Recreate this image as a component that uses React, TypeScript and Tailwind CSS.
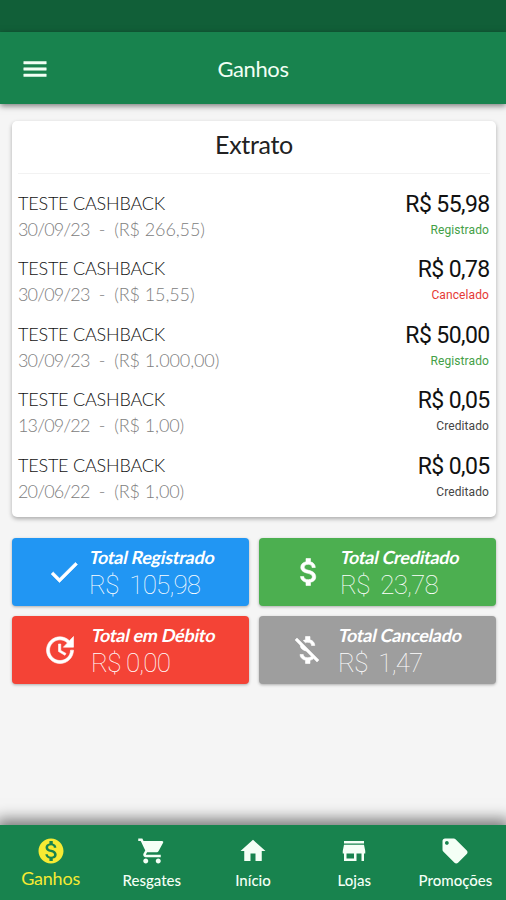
import React from "react";
import {
  MdMenu, MdCheck, MdUpdate, MdAttachMoney, MdMoneyOff, MdMonetizationOn,
  MdShoppingCart, MdHome, MdStore, MdLocalOffer,
} from "react-icons/md";

const entries = [
  { date: "30/09/23", base: "(R$ 266,55)", value: "R$ 55,98", status: "Registrado", color: "text-[#43a047]" },
  { date: "30/09/23", base: "(R$ 15,55)", value: "R$ 0,78", status: "Cancelado", color: "text-[#e53935]" },
  { date: "30/09/23", base: "(R$ 1.000,00)", value: "R$ 50,00", status: "Registrado", color: "text-[#43a047]" },
  { date: "13/09/22", base: "(R$ 1,00)", value: "R$ 0,05", status: "Creditado", color: "text-[#444]" },
  { date: "20/06/22", base: "(R$ 1,00)", value: "R$ 0,05", status: "Creditado", color: "text-[#444]" },
];

const totals = [
  { label: "Total Registrado", value: "R$  105,98", Icon: MdCheck, bg: "bg-[#2196f3]", pad: "pl-[34px]", gap: "ml-[7px]" },
  { label: "Total Creditado", value: "R$  23,78", Icon: MdAttachMoney, bg: "bg-[#4caf50]", pad: "pl-[32px]", gap: "ml-[13px]" },
  { label: "Total em Débito", value: "R$ 0,00", Icon: MdUpdate, bg: "bg-[#f44336]", pad: "pl-[30px]", gap: "ml-[13px]" },
  { label: "Total Cancelado", value: "R$  1,47", Icon: MdMoneyOff, bg: "bg-[#9e9e9e]", pad: "pl-[30px]", gap: "ml-[13px]" },
];

const tabs = [
  { label: "Ganhos", Icon: MdMonetizationOn },
  { label: "Resgates", Icon: MdShoppingCart },
  { label: "Início", Icon: MdHome },
  { label: "Lojas", Icon: MdStore },
  { label: "Promoções", Icon: MdLocalOffer },
];

export default function App() {
  return (
    <div className="flex h-[900px] w-[506px] flex-col overflow-hidden bg-[#f5f5f5] font-[Lato,sans-serif]">
      <div className="h-8 shrink-0 bg-[#115f38]" />
      <header className="relative flex h-[72px] shrink-0 items-center bg-[#18834e] text-[#f1fff4] shadow-[0_2px_6px_rgba(0,0,0,0.5)]">
        <MdMenu size={30} strokeWidth={0.4} className="mt-px ml-5 [&>path[fill=none]]:stroke-none" />
        <h1 className="-ml-[50px] flex-1 pt-px text-center text-[22px] leading-6 tracking-[-0.4px]">Ganhos</h1>
      </header>

      <main className="flex-1 pt-[17px] pr-[10px] pl-[12px]">
        <section className="h-[396px] rounded-[5px] bg-white pr-[6px] pl-[6px] shadow-[0_2px_4px_rgba(0,0,0,0.3)]">
          <h2 className="h-[53px] border-b border-[#f2f2f2] pt-[7px] text-center text-[25px] leading-8 tracking-[-0.3px] text-[#222]">Extrato</h2>
          <ul className="pt-[16px]">
            {entries.map((e, i) => (
              <li key={i} className="flex h-[65.4px] justify-between">
                <div>
                  <p className="text-[18px] leading-[26px] font-light tracking-[-0.2px] text-[#111]">TESTE CASHBACK</p>
                  <p className="text-[18px] leading-[26px] font-light whitespace-pre text-[#808080]">
                    <span className="tracking-[-0.85px]">{e.date}</span>
                    <span className="tracking-[-0.3px]">{"  -  "}</span>
                    <span className="tracking-[-0.1px]">{e.base}</span>
                  </p>
                </div>
                <div className="pt-px pr-px text-right font-[Roboto,sans-serif]">
                  <p className="-mr-[0.6px] text-[23px] leading-[28px] tracking-[-0.6px] text-[#111]">{e.value}</p>
                  <p className={"text-[12px] leading-[22px] tracking-[0.1px] " + e.color}>{e.status}</p>
                </div>
              </li>
            ))}
          </ul>
        </section>

        <section className="mt-[21px] grid grid-cols-2 gap-x-[10px] gap-y-[10px]">
          {totals.map(({ label, value, Icon, bg, pad, gap }) => (
            <div key={label} className={"flex h-[68px] items-center rounded-[4px] text-white shadow-[0_1px_3px_rgba(0,0,0,0.3)] " + bg + " " + pad}>
              <Icon size={36} strokeWidth={0.4} className="shrink-0 [&>path[fill=none]]:stroke-none" />
              <div className={"whitespace-pre " + gap}>
                <p className="-skew-x-12 pl-px text-[18px] leading-[26px] font-bold tracking-[-0.25px]">{label}</p>
                <p className="font-[Roboto,sans-serif] text-[26px] leading-[30px] font-thin tracking-[-0.85px]">{value}</p>
              </div>
            </div>
          ))}
        </section>
      </main>

      <nav className="grid h-[75px] shrink-0 grid-cols-5 bg-[#18834e] text-[#f4fff6] shadow-[0_-2px_14px_4px_rgba(0,0,0,0.5)]">
        {tabs.map(({ label, Icon }, i) => (
          <div key={label} className={"flex flex-col items-center pt-[11px] " + (i === 0 ? "text-[#f6ea33]" : "")}>
            <Icon size={30} />
            <span className={i === 0 ? "text-[18px] leading-[25px] tracking-[-0.2px]" : "pt-[2px] text-[15px] leading-[24px] font-medium"}>{label}</span>
          </div>
        ))}
      </nav>
    </div>
  );
}
